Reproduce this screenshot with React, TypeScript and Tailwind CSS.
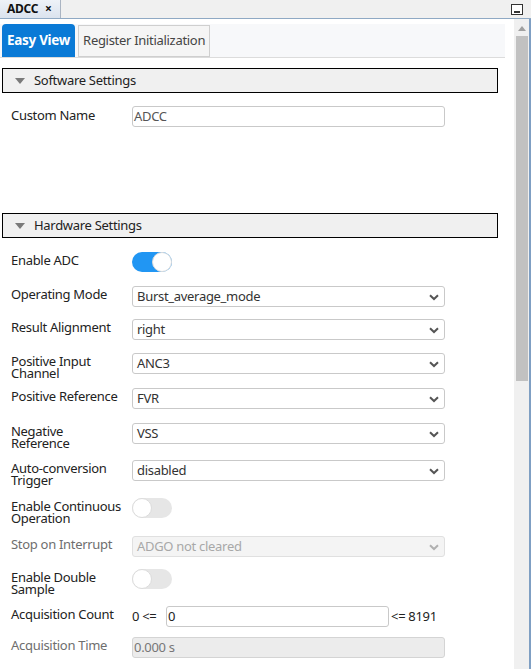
import React from 'react';

const FONT = { fontFamily: '"Segoe UI", "Noto Sans", "Open Sans", sans-serif', letterSpacing: '-0.3px' };

function Chevron({ disabled }: { disabled?: boolean }) {
  return (
    <svg width="10" height="7" viewBox="0 0 10 7" className="absolute right-[5px] top-[7px]">
      <path d="M1 1.2 L5 5 L9 1.2" fill="none" stroke={disabled ? '#b0b0b0' : '#555'} strokeWidth="2" />
    </svg>
  );
}

function Select({ value, disabled }: { value: string; disabled?: boolean }) {
  return (
    <div
      className={`relative h-[21px] w-[313px] rounded-[3px] border pl-[4px] text-[13px] leading-[19px] ${
        disabled ? 'border-[#e0e0e0] bg-[#f4f4f4] text-[#a8a8a8]' : 'border-[#c9c9c9] bg-white text-[#333]'
      }`}
    >
      {value}
      <Chevron disabled={disabled} />
    </div>
  );
}

function Toggle({ on }: { on?: boolean }) {
  return (
    <div className={`relative h-[20px] w-[40px] rounded-full ${on ? 'bg-[#2196f3]' : 'bg-[#e6e6e6]'}`}>
      <div
        className={`absolute top-0 h-[20px] w-[20px] rounded-full border border-[#dcdcdc] bg-white ${
          on ? 'right-0' : 'left-0'
        }`}
      />
    </div>
  );
}

function SectionHeader({ title }: { title: string }) {
  return (
    <div className="ml-[2px] flex h-[25px] w-[496px] items-center border border-black bg-[#f0f0f0] text-[13px] text-[#222]">
      <svg width="10" height="6" viewBox="0 0 10 6" className="ml-[12px] mr-[9px]">
        <path d="M0 0 L10 0 L5 6 Z" fill="#7a7a7a" />
      </svg>
      {title}
    </div>
  );
}

type Row = {
  label: string;
  h: string;
  muted?: boolean;
  control: React.ReactNode;
};

const rows: Row[] = [
  { label: 'Enable ADC', h: 'h-[34px]', control: <Toggle on /> },
  { label: 'Operating Mode', h: 'h-[33px]', control: <Select value="Burst_average_mode" /> },
  { label: 'Result Alignment', h: 'h-[34px]', control: <Select value="right" /> },
  { label: 'Positive Input\nChannel', h: 'h-[35px]', control: <Select value="ANC3" /> },
  { label: 'Positive Reference', h: 'h-[35px]', control: <Select value="FVR" /> },
  { label: 'Negative\nReference', h: 'h-[37px]', control: <Select value="VSS" /> },
  { label: 'Auto-conversion\nTrigger', h: 'h-[38px]', control: <Select value="disabled" /> },
  { label: 'Enable Continuous\nOperation', h: 'h-[38px]', control: <Toggle /> },
  { label: 'Stop on Interrupt', h: 'h-[33px]', muted: true, control: <Select value="ADGO not cleared" disabled /> },
  { label: 'Enable Double\nSample', h: 'h-[37px]', control: <Toggle /> },
  {
    label: 'Acquisition Count',
    h: 'h-[31px]',
    control: (
      <div className="flex items-center text-[13px] text-[#222]">
        <span className="w-[34px]">0 &lt;=</span>
        <div className="h-[21px] w-[223px] rounded-[3px] border border-[#c9c9c9] bg-white pl-[1px] leading-[19px]">
          0
        </div>
        <span className="ml-[2px]">&lt;= 8191</span>
      </div>
    ),
  },
  {
    label: 'Acquisition Time',
    h: 'h-[33px]',
    muted: true,
    control: (
      <div className="h-[21px] w-[313px] rounded-[3px] border border-[#d4d4d4] bg-[#ececec] pl-[1px] text-[13px] leading-[19px] text-[#777]">
        0.000 s
      </div>
    ),
  },
];

export default function App() {
  return (
    <div className="flex h-[669px] w-[531px] flex-col overflow-hidden bg-white" style={FONT}>
      {/* view tab strip */}
      <div className="flex h-[19px] shrink-0 items-stretch border-b border-[#8fa9c4] bg-[#f0f0f0]">
        <div className="flex items-center border-r border-[#aab4c2] bg-gradient-to-b from-[#eef2f8] to-[#dbe3ee] pl-[7px] pr-[8px] text-[12px] font-bold text-[#111]">
          ADCC
          <span className="ml-[7px] text-[12px]">×</span>
        </div>
        <div className="flex-1" />
        <div className="mr-[8px] mt-[4px] h-[11px] w-[12px] border border-[#333] bg-white p-[2px]">
          <div className="mt-[4px] h-[2px] bg-[#333]" />
        </div>
      </div>

      <div className="flex min-h-0 flex-1 border-r-2 border-[#7f9fc3]">
        <div className="min-w-0 flex-1">
          {/* sub tabs */}
          <div className="mt-[5px] flex h-[34px] w-[505px] items-end border-b border-[#dcdcdc] bg-[#f7f8fa] pl-[2px]">
            <div className="flex h-[33px] items-center rounded-t-[4px] bg-[#0a7ad6] px-[5px] text-[13.5px] font-bold text-white">
              Easy View
            </div>
            <div className="ml-[3px] flex h-[32px] items-center border border-[#cfcfcf] bg-[#f5f5f5] px-[4px] text-[13px] text-[#444]">
              Register Initialization
            </div>
          </div>

          <div className="mt-[10px]">
            <SectionHeader title="Software Settings" />
          </div>
          <div className="mt-[13px] flex items-start pl-[11px] text-[13px] text-[#222]">
            <div className="w-[121px]">Custom Name</div>
            <div className="h-[21px] w-[313px] rounded-[3px] border border-[#c9c9c9] bg-white pl-[1px] leading-[19px] text-[#555]">
              ADCC
            </div>
          </div>

          <div className="mt-[86px]">
            <SectionHeader title="Hardware Settings" />
          </div>
          <div className="mt-[14px] pl-[11px]">
            {rows.map((r) => (
              <div key={r.label} className={`flex items-start ${r.h}`}>
                <div
                  className={`mt-[2px] w-[121px] shrink-0 whitespace-pre text-[13px] leading-[12px] ${
                    r.muted ? 'text-[#6e6e6e]' : 'text-[#222]'
                  }`}
                >
                  {r.label}
                </div>
                {r.control}
              </div>
            ))}
          </div>
        </div>

        {/* scrollbar */}
        <div className="flex w-[15px] shrink-0 flex-col items-center bg-[#f0f0f0]">
          <svg width="8" height="5" viewBox="0 0 8 5" className="mt-[7px]">
            <path d="M0 5 L4 0 L8 5 Z" fill="#a0a0a0" />
          </svg>
          <div className="mt-[5px] h-[345px] w-[12px] bg-[#c1c1c1]" />
        </div>
      </div>
    </div>
  );
}
